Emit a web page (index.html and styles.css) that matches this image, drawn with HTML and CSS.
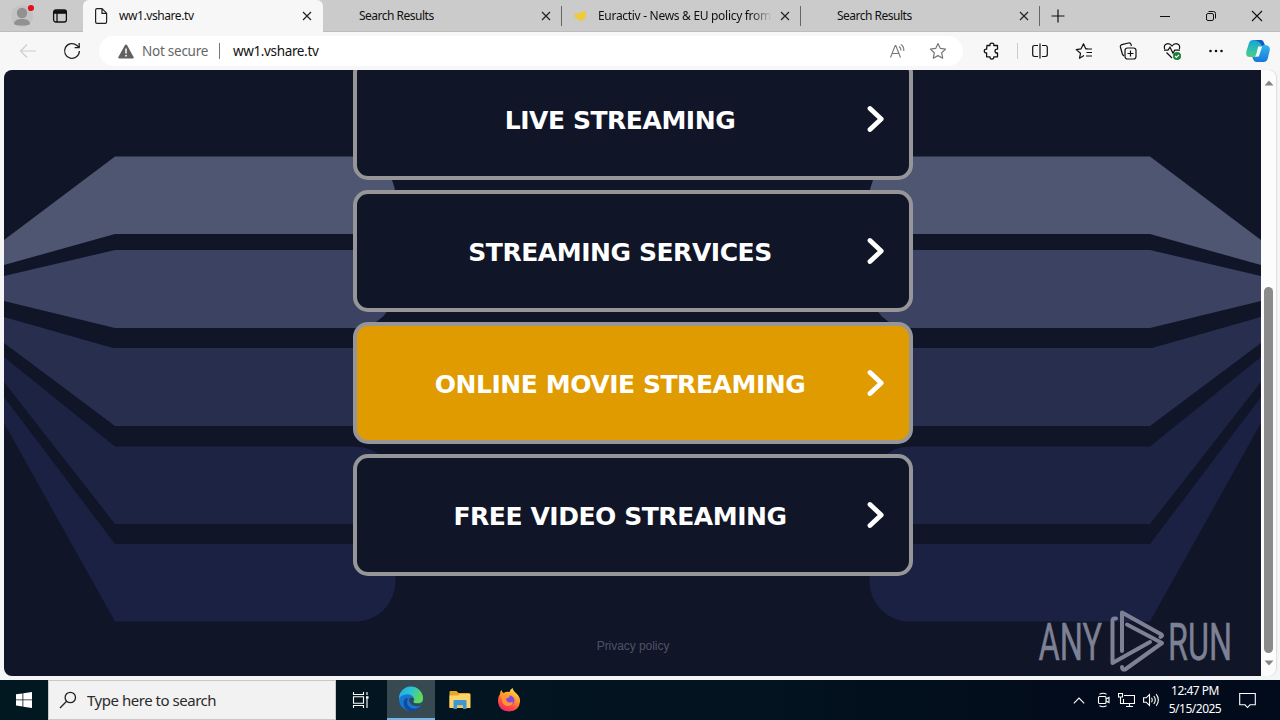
FILE: index.html
```html
<!DOCTYPE html>
<html lang="en">
<head>
<meta charset="utf-8">
<title>ww1.vshare.tv</title>
<link rel="stylesheet" href="styles.css">
</head>
<body>
<div class="screen">
  <header class="tabstrip">
    <div class="profile">
      <svg width="24" height="24" viewBox="0 0 24 24"><circle cx="12" cy="12" r="11" fill="#c3c3c3"/><circle cx="12" cy="9" r="5.2" fill="#939090"/><path d="M4 20c0-4 4-5 8-5s8 1 8 5c-2 2-14 2-16 0z" fill="#939090"/><circle cx="21" cy="4" r="3.1" fill="#e0101c"/></svg>
    </div>
    <div class="workspace">
      <svg width="16" height="16" viewBox="0 0 16 16" fill="none" stroke="#111" stroke-width="1.3"><rect x="1.6" y="2" width="12.8" height="12" rx="2.2"/><path d="M1.8 4h12.4" stroke-width="3.6"/><path d="M5 5v9"/></svg>
    </div>
    <div class="tab active">
      <svg class="favicon" width="16" height="18" viewBox="0 0 16 18" fill="none" stroke="#222" stroke-width="1.2"><path d="M2.6 3.2Q2.6 1.6 4 1.6h5l4.6 4.6v8.6q0 1.6-1.4 1.6H4q-1.4 0-1.4-1.6zM9 1.8v4.6h4.6"/></svg>
      <span class="title t1">ww1.vshare.tv</span>
      <svg class="x" width="10" height="10" viewBox="0 0 10 10"><path d="M1 1l8 8M9 1l-8 8"/></svg>
    </div>
    <div class="tab">
      <span class="favicon"></span>
      <span class="title t2">Search Results</span>
      <svg class="x" width="10" height="10" viewBox="0 0 10 10"><path d="M1 1l8 8M9 1l-8 8"/></svg>
    </div>
    <div class="tab">
      <svg class="favicon" width="16" height="18" viewBox="0 0 16 18"><path d="M3 7l4.500-1.200 5.500-1.800q1.800 0 1.300 2.400l-1.500 5q-1 2.600-4.200 2.400-2.600 0-4-2.200-1.600-.6-2.600-2.800 0-1.200 1-1.800z" fill="#eecb3d"/></svg>
      <span class="title t3 faded">Euractiv - News &amp; EU policy from</span>
      <svg class="x" width="10" height="10" viewBox="0 0 10 10"><path d="M1 1l8 8M9 1l-8 8"/></svg>
    </div>
    <div class="tab">
      <span class="favicon"></span>
      <span class="title t2">Search Results</span>
      <svg class="x" width="10" height="10" viewBox="0 0 10 10"><path d="M1 1l8 8M9 1l-8 8"/></svg>
    </div>
    <div class="newtab"><svg width="14" height="14" viewBox="0 0 14 14"><path d="M7 .5v13M.5 7h13" stroke="#111" stroke-width="1.2"/></svg></div>
    <div class="winbtns">
      <svg width="12" height="12" viewBox="0 0 12 12" fill="none" stroke="#111"><path d="M1 6.500h10"/></svg>
      <svg width="12" height="12" viewBox="0 0 12 12" fill="none" stroke="#111"><rect x="1.500" y="3.500" width="7" height="7" rx="1.500"/><path d="M3.500 1.500h5q2 0 2 2v5"/></svg>
      <svg width="12" height="12" viewBox="0 0 12 12" fill="none" stroke="#111" stroke-width="1.100"><path d="M1 1l10 10M11 1L1 11"/></svg>
    </div>
  </header>

  <div class="toolbar">
    <div class="tool"><svg width="18" height="16" viewBox="0 0 18 16" fill="none" stroke="#cecece" stroke-width="1.200"><path d="M17 8H1.500M8 1.500L1.500 8 8 14.500"/></svg></div>
    <div class="tool"><svg width="18" height="18" viewBox="0 0 18 18" fill="none" stroke="#222" stroke-width="1.300"><path d="M16.400 9A7.400 7.400 0 1 1 14 3.500L16 5.400M16.200 1v4.600h-4.600"/></svg></div>
    <div class="address">
      <svg class="warn" width="16" height="15" viewBox="0 0 16 15"><path d="M8 .5q.7 0 1 .6l6.600 12q.6 1.400-.9 1.400H1.300q-1.500 0-.9-1.400L7 1.100q.3-.6 1-.6z" fill="#616161"/><path d="M8 4.500v5" stroke="#fff" stroke-width="1.500"/><circle cx="8" cy="11.700" r=".9" fill="#fff"/></svg>
      <span class="notsecure">Not secure</span>
      <span class="divider"></span>
      <span class="url">ww1.vshare.tv</span>
      <svg class="read" width="18" height="16" viewBox="0 0 18 16" fill="none" stroke="#777" stroke-width="1.100"><path d="M1.500 14.500L6.200 2.500h.6l4.700 12M3.200 10.500h6.600M10 3.500q2 1.300 2 4M11.800 1.500q3.400 2 3 6.500"/></svg>
      <svg class="star" width="18" height="18" viewBox="0 0 18 18" fill="none" stroke="#777" stroke-width="1.200" stroke-linejoin="round"><path d="M9 1.500l2.300 4.900 5.300.7-3.900 3.700 1 5.400L9 13.600l-4.700 2.600 1-5.400L1.400 7.100l5.300-.7z"/></svg>
    </div>
    <div class="tool puzzle"><svg width="18" height="18" viewBox="0 0 18 18" fill="none" stroke="#111" stroke-width="1.300" stroke-linejoin="round"><path d="M4 3.500h3q-.4-2.400 1.900-2.400T10.800 3.500h3.700v3.700q-2.500-.2-2.500 1.900t2.500 1.900v3.800h-3.700q.2 2.300-1.900 2.300T7 14.800H3.600v-3.900Q1.300 11 1.300 9t2.300-1.900z"/></svg></div>
    <div class="toolsep"></div>
    <div class="tool"><svg width="16" height="16" viewBox="0 0 16 16" fill="none" stroke="#111" stroke-width="1.200"><path d="M6 2.500H2.600Q.7 2.500.7 4.400v7.200q0 1.900 1.900 1.900H6M10 2.500h3.400q1.900 0 1.900 1.900v7.200q0 1.900-1.900 1.900H10M8 .5v15"/></svg></div>
    <div class="tool"><svg width="18" height="18" viewBox="0 0 18 18" fill="none" stroke="#111" stroke-width="1.200" stroke-linejoin="round"><path d="M12.500 7h4.500M11.500 10.500H17M11 14h6M9 13.500l-4.500 2.800 1-5L1.200 7.600l4.900-.8 2.400-5 2.200 5h2.200"/></svg></div>
    <div class="tool"><svg width="18" height="18" viewBox="0 0 18 18" fill="none" stroke="#111" stroke-width="1.200"><rect x="6" y="6" width="11" height="11" rx="2.500"/><path d="M11.500 8.500v6M8.500 11.500h6M3.500 12.500L1.400 5Q1 3.200 2.800 2.600L9.500 1q2-.4 2.500 1.400l.4 1.600M5 14l-1.500-1.500"/></svg></div>
    <div class="tool"><svg width="18" height="18" viewBox="0 0 18 18" fill="none" stroke="#111" stroke-width="1.200"><path d="M1.600 7Q.5 2.500 4 1.800 7 1.300 9 4q2-2.700 5-2.200 3.500.7 2.400 5.200M3.500 10.500L9 16M1 8.200h4l2-3 3 6 1.700-3H17"/><circle cx="14" cy="14" r="4" fill="#188038" stroke="none"/><path d="M12 14l1.400 1.400 2.600-2.600" stroke="#fff"/></svg></div>
    <div class="tool"><svg width="16" height="4" viewBox="0 0 16 4" fill="#111"><circle cx="2.500" cy="2" r="1.300"/><circle cx="8" cy="2" r="1.300"/><circle cx="13.500" cy="2" r="1.300"/></svg></div>
    <div class="tool copilot"><svg width="24" height="24" viewBox="0 0 24 24"><defs><linearGradient id="cl" x1="0" y1="0" x2="0" y2="1"><stop offset="0" stop-color="#16a3d8"/><stop offset=".75" stop-color="#38c7a0"/><stop offset="1" stop-color="#58c774"/></linearGradient><linearGradient id="cr" x1="0" y1="0" x2="0" y2="1"><stop offset="0" stop-color="#30b4f0"/><stop offset="1" stop-color="#1878dd"/></linearGradient></defs><path d="M7 1h8q2 0 3 3l1 3q-3 0-4 3l-2 6q-1 2-3 2H4q-5 0-3.500-6L3 4q1-3 4-3z" fill="url(#cl)"/><path d="M8 1h7q2 0 3 3l1 3h-3q-2-5-8-6z" fill="#1558c0"/><path d="M18 6q7 0 5.600 6l-2 8q-1 3-4 3H10q-2 0-3-3l-.6-2H10q2 0 3-2l2-7q1-3 3-3z" fill="url(#cr)"/><path d="M12.200 7.500h4L12.800 17.500H8.500q1.200-.5 1.700-2z" fill="#f4fbff"/></svg></div>
  </div>

  <div class="viewport">
    <main class="page">
      <svg class="backdrop" width="1257" height="606" viewBox="4 70 1257 606">
        <defs>
          <g id="fan">
            <path d="M4 240L115 156.500H355A40 40 0 0 1 395.500 196V234H115L4 265z" fill="#4e5672"/>
            <path d="M4 276L115 250H395V288A40 40 0 0 1 355 328H115L4 301z" fill="#3c4261"/>
            <path d="M4 317L113 348H395V426H115L4 343z" fill="#272e4e"/>
            <path d="M4 357L115 446.500H355A40 40 0 0 1 395 486V524H115L4 382z" fill="#1c2343"/>
            <path d="M4 397L115 544H395.500V582A40 40 0 0 1 355 621.500H115L4 423z" fill="#1a2142"/>
          </g>
        </defs>
        <use href="#fan"/>
        <use href="#fan" transform="translate(1265 0) scale(-1 1)"/>
      </svg>
      <nav class="links">
        <a class="link"><span>LIVE STREAMING</span><svg class="chev" width="17" height="28" viewBox="0 0 17 28"><path d="M3 3.500L14.200 14 3 24.500"/></svg></a>
        <a class="link"><span>STREAMING SERVICES</span><svg class="chev" width="17" height="28" viewBox="0 0 17 28"><path d="M3 3.500L14.200 14 3 24.500"/></svg></a>
        <a class="link hover"><span>ONLINE MOVIE STREAMING</span><svg class="chev" width="17" height="28" viewBox="0 0 17 28"><path d="M3 3.500L14.200 14 3 24.500"/></svg></a>
        <a class="link"><span>FREE VIDEO STREAMING</span><svg class="chev" width="17" height="28" viewBox="0 0 17 28"><path d="M3 3.500L14.200 14 3 24.500"/></svg></a>
      </nav>
      <footer class="privacy">Privacy policy</footer>
      <svg class="watermark" width="210" height="66" viewBox="1035 608 210 66">
        <text transform="translate(1038.500 660) scale(.626 1)">ANY</text>
        <text transform="translate(1168 660) scale(.622 1)">RUN</text>
        <g fill="none" stroke="#7d8193" stroke-width="4" stroke-linejoin="round" stroke-linecap="round">
          <path d="M1122 651V612.500L1161.500 634.500Q1163 636 1160.500 637"/>
          <path d="M1116 618.500H1114.500Q1112.500 618.500 1112.500 621V663L1150 642"/>
          <path d="M1127 624.500L1162 643L1125 669.500Q1122 670 1122 667"/>
        </g>
      </svg>
    </main>
    <div class="scrollbar">
      <svg width="10" height="6" viewBox="0 0 10 6"><path d="M5 .5L9.500 5.500H.5z" fill="#858585"/></svg>
      <div class="track"><div class="thumb"></div></div>
      <svg width="10" height="6" viewBox="0 0 10 6"><path d="M5 5.500L9.500 .5H.5z" fill="#858585"/></svg>
    </div>
  </div>

  <footer class="taskbar">
    <div class="start"><svg width="16" height="16" viewBox="0 0 16 16" fill="#fff"><path d="M0 2.300L6.500 1.400V7.500H0zM7.300 1.300L16 0v7.500H7.300zM0 8.300h6.500v6.200L0 13.600zM7.300 8.300H16V16l-8.700-1.300z"/></svg></div>
    <div class="search">
      <svg width="18" height="18" viewBox="0 0 18 18" fill="none" stroke="#222" stroke-width="1.300"><circle cx="11.300" cy="6.500" r="5.200"/><path d="M7.600 10.200L1 17"/></svg>
      <span>Type here to search</span>
    </div>
    <div class="app"><svg width="18" height="16" viewBox="0 0 18 16" fill="none" stroke="#fff" stroke-width="1.100"><path d="M1.500 0v2.500h10V0M1.500 16v-2.500h10V16M1.500 4.800h10v6.400h-10zM15 0v3M15 7v9"/><path d="M14 5.500h2.500" stroke-width="2.500"/></svg></div>
    <div class="app current"><svg width="26" height="26" viewBox="0 0 26 26"><defs><linearGradient id="e1" x1="0" y1="0" x2="1" y2=".4"><stop offset="0" stop-color="#21a9e5"/><stop offset=".5" stop-color="#2bc3d2"/><stop offset="1" stop-color="#62d957"/></linearGradient></defs><circle cx="13" cy="13" r="12" fill="#1877d2"/><path d="M1 13A12 12 0 0 1 25 12q.5 5-5.500 5.500-5 0-4-2.500 1.500-1 .5-3-2-4-7-3.800Q3 8.500 1 13z" fill="url(#e1)"/><path d="M10 12q-3 7 3 10 5 2 10-2-4 6-11 5.200Q5 23 5.500 16q.5-4 4.500-4z" fill="#124b9c"/><path d="M15.500 15q-1 2.500 4 2.500 3 0 5-1.500l-1.500 3.500q-3 1-6 .5-5-1-6-5.500 0-3 2.500-3 3 .8 2 3.500z" fill="#334a55"/></svg></div>
    <div class="app"><svg width="22" height="20" viewBox="0 0 22 20"><path d="M.5 2q0-1 1-1h6l2 2H20q1 0 1 1v13q0 1-1 1H1.500q-1 0-1-1z" fill="#e8a72c"/><path d="M.5 5.500H9L11 4h10.500v14H.5z" fill="#fbd667"/><path d="M4.500 11q0-1 1-1h11q1 0 1 1v8h-3.500v-3.500H8V19H4.500z" fill="#3e97d5"/><path d="M8 15.500h6v2H8z" fill="#eec257"/></svg></div>
    <div class="app"><svg width="24" height="24" viewBox="0 0 24 24"><defs><linearGradient id="f1" x1=".8" y1="0" x2=".3" y2="1"><stop offset="0" stop-color="#ffe84a"/><stop offset=".4" stop-color="#ff9a2b"/><stop offset=".75" stop-color="#ff4648"/><stop offset="1" stop-color="#e72a72"/></linearGradient></defs><path d="M3 6q0-3 1.500-4 .5 2 2 3 3-2 6-1Q13 1.500 15.500 0q.5 3 4 5.500Q23.500 9 23 14q-1 9-11 9.500Q2 23 1 14q-.3-5 2-8z" fill="url(#f1)"/><circle cx="12.500" cy="12.500" r="5" fill="#8448e0"/><path d="M3 6q3-2 6 1 3-1 4 1-1 2-4 2.500 0 3 3 4 3 0 4-1 0 4-5 4.500Q5 18 5 11z" fill="#ff9631"/></svg></div>
    <div class="tray">
      <svg class="up" width="12" height="7" viewBox="0 0 12 7"><path d="M.8 6.300L6 1l5.200 5.300"/></svg>
      <svg class="cam" width="14" height="16" viewBox="0 0 14 16"><rect x="1.500" y="4.500" width="7.500" height="7" rx="1"/><path d="M9 7l3-1.500v5L9 9M2.500 2.200Q6 .2 9.500 2.200M2.500 13.800q3.500 2 7 0"/></svg>
      <svg class="net" width="17" height="14" viewBox="0 0 17 14"><path d="M6 2.500h10.500v8H5.500V6M8 13.500h7M11.500 10.500v3M.5.5h4v3.500h-4zM2.500 4v6.500h3"/></svg>
      <svg class="vol" width="17" height="14" viewBox="0 0 17 14"><path d="M.6 4.800h2.600L6.500 1.500v11L3.200 9.200H.6zM8.500 4.800q1.500 2.200 0 4.400M10.800 3q3 4 0 8M13.200 1.200q4.300 5.800 0 11.600"/></svg>
      <div class="clock"><span>12:47 PM</span><span>5/15/2025</span></div>
      <svg class="note" width="17" height="17" viewBox="0 0 17 17"><path d="M.7 1.500h15.600v11.300H11L8.500 15.500 6 12.800H.7z"/></svg>
    </div>
  </footer>
</div>
</body>
</html>
```
FILE: styles.css
```css
* { box-sizing: border-box; }
body { margin: 0; font-family: "Noto Sans", "Open Sans", sans-serif; color: #111; }
svg { display: block; flex: none; }
.screen { width: 1280px; height: 720px; overflow: hidden; display: flex; flex-direction: column; background: #f4f5f6; }

.tabstrip { height: 32px; flex: none; display: flex; background: #cbcbcb; box-shadow: inset 0 -1px #bdbdbd; }
.profile { width: 42px; padding: 4px 0 0 10px; }
.workspace { width: 41px; padding: 8px 0 0 10px; }
.tab { width: 239px; height: 32px; display: flex; align-items: center; padding-left: 10px; padding-right: 11px; background: linear-gradient(#666, #666) right 6px / 1px 20px no-repeat; }
.tab.active { width: 240px; background: #f7f7f7; border-radius: 6px 6px 0 0; }
.favicon { width: 16px; flex: none; margin-right: 10px; }
.title { flex: 1; font-size: 12px; line-height: 16px; white-space: nowrap; overflow: hidden; margin-right: 8px; }
.t1 { letter-spacing: -0.42px; }
.t2 { letter-spacing: -0.5px; }
.t3 { letter-spacing: -0.3px; }
.faded { -webkit-mask-image: linear-gradient(90deg, #000 88%, transparent); mask-image: linear-gradient(90deg, #000 88%, transparent); }
.x { stroke: #222; stroke-width: 1.2; fill: none; }
.newtab { padding: 9px 0 0 11px; flex: 1; }
.winbtns { display: flex; gap: 34px; padding: 10px 17px 0 0; }

.toolbar { height: 38px; flex: none; display: flex; align-items: center; background: #f7f7f7; padding-left: 6px; }
.tool { width: 44px; display: flex; justify-content: center; flex: none; }
.puzzle { padding-left: 2px; }
.copilot { width: 40px; }
.toolsep { width: 5px; height: 16px; border-right: 1px solid #ccc; flex: none; }
.address { width: 864px; height: 30px; margin: 0 6px 0 5px; flex: none; border-radius: 15px; background: #fff; display: flex; align-items: center; font-size: 13.5px; padding-left: 19px; padding-right: 16px; }
.notsecure { color: #666; width: 79px; margin-left: 8px; letter-spacing: -0.25px; white-space: nowrap; }
.divider { width: 1px; height: 16px; background: #777; margin-left: -2px; margin-right: 13px; }
.url { flex: 1; letter-spacing: -0.36px; }
.star { margin-left: 22px; }

.viewport { height: 610px; flex: none; display: flex; padding: 0 4px 4px; background: #f4f5f6; }
.page { width: 1257px; height: 606px; position: relative; overflow: hidden; background: #101528; border-radius: 8px 0 0 8px; display: flex; flex-direction: column; align-items: center; }
.backdrop { position: absolute; inset: 0; }
.links { position: relative; width: 560px; margin-top: -12px; margin-left: 1px; display: flex; flex-direction: column; gap: 10px; }
.link { height: 122px; border: 4px solid #969699; border-radius: 15px; background: #101528; color: #fff; display: flex; align-items: center; padding: 0 25px 0 16px; font: 700 25px/30px "DejaVu Sans", Verdana, sans-serif; letter-spacing: -0.44px; text-align: center; }
.link span { flex: 1; white-space: nowrap; padding-top: 4px; }
.hover { background: #e09b00; }
.chev { fill: none; stroke: #fff; stroke-width: 4.8; stroke-linecap: round; stroke-linejoin: round; }
.privacy { position: relative; margin-top: 62px; margin-left: 1px; font: 12px/16px "Liberation Sans", sans-serif; color: #4e5265; letter-spacing: -0.05px; }
.watermark { position: absolute; left: 1031px; top: 538px; }
.watermark text { font: 400 52px Roboto, sans-serif; fill: #7d8193; stroke: #7d8193; stroke-width: 0.5px; }
.scrollbar { width: 15px; background: #fcfcfc; border-radius: 0 8px 8px 0; display: flex; flex-direction: column; align-items: center; padding: 10px 0; box-shadow: 1px 0 1px #ddd; }
.track { flex: 1; padding-top: 201px; }
.thumb { width: 9px; height: 366px; border-radius: 5px; background: #8a8a8a; }

.taskbar { height: 40px; flex: none; display: flex; background: linear-gradient(90deg, #021821, #03131f 60%, #020b1b 85%); }
.start { width: 48px; display: flex; align-items: center; justify-content: center; }
.search { width: 288px; background: #f2f2f2; border: 1px solid #c8c8c8; display: flex; align-items: center; padding-left: 10px; font-size: 15px; color: #2b2b2b; }
.search span { margin-left: 10px; letter-spacing: -0.47px; white-space: nowrap; }
.app { width: 49px; display: flex; align-items: center; justify-content: center; }
.app:nth-child(3) { width: 51px; padding-right: 2px; }
.current { width: 48px; background: #374951; border-bottom: 2px solid #76b5e6; }
.tray { margin-left: auto; display: flex; align-items: center; padding-right: 24px; }
.tray svg { fill: none; stroke: #fff; stroke-width: 1.1; }
.cam { margin-left: 12px; }
.net { margin-left: 7px; }
.vol { margin-left: 8px; }
.clock { width: 60px; margin: 0 14px 0 5px; display: flex; flex-direction: column; align-items: center; color: #fff; font-size: 12px; line-height: 18px; letter-spacing: -0.5px; white-space: nowrap; }
```
